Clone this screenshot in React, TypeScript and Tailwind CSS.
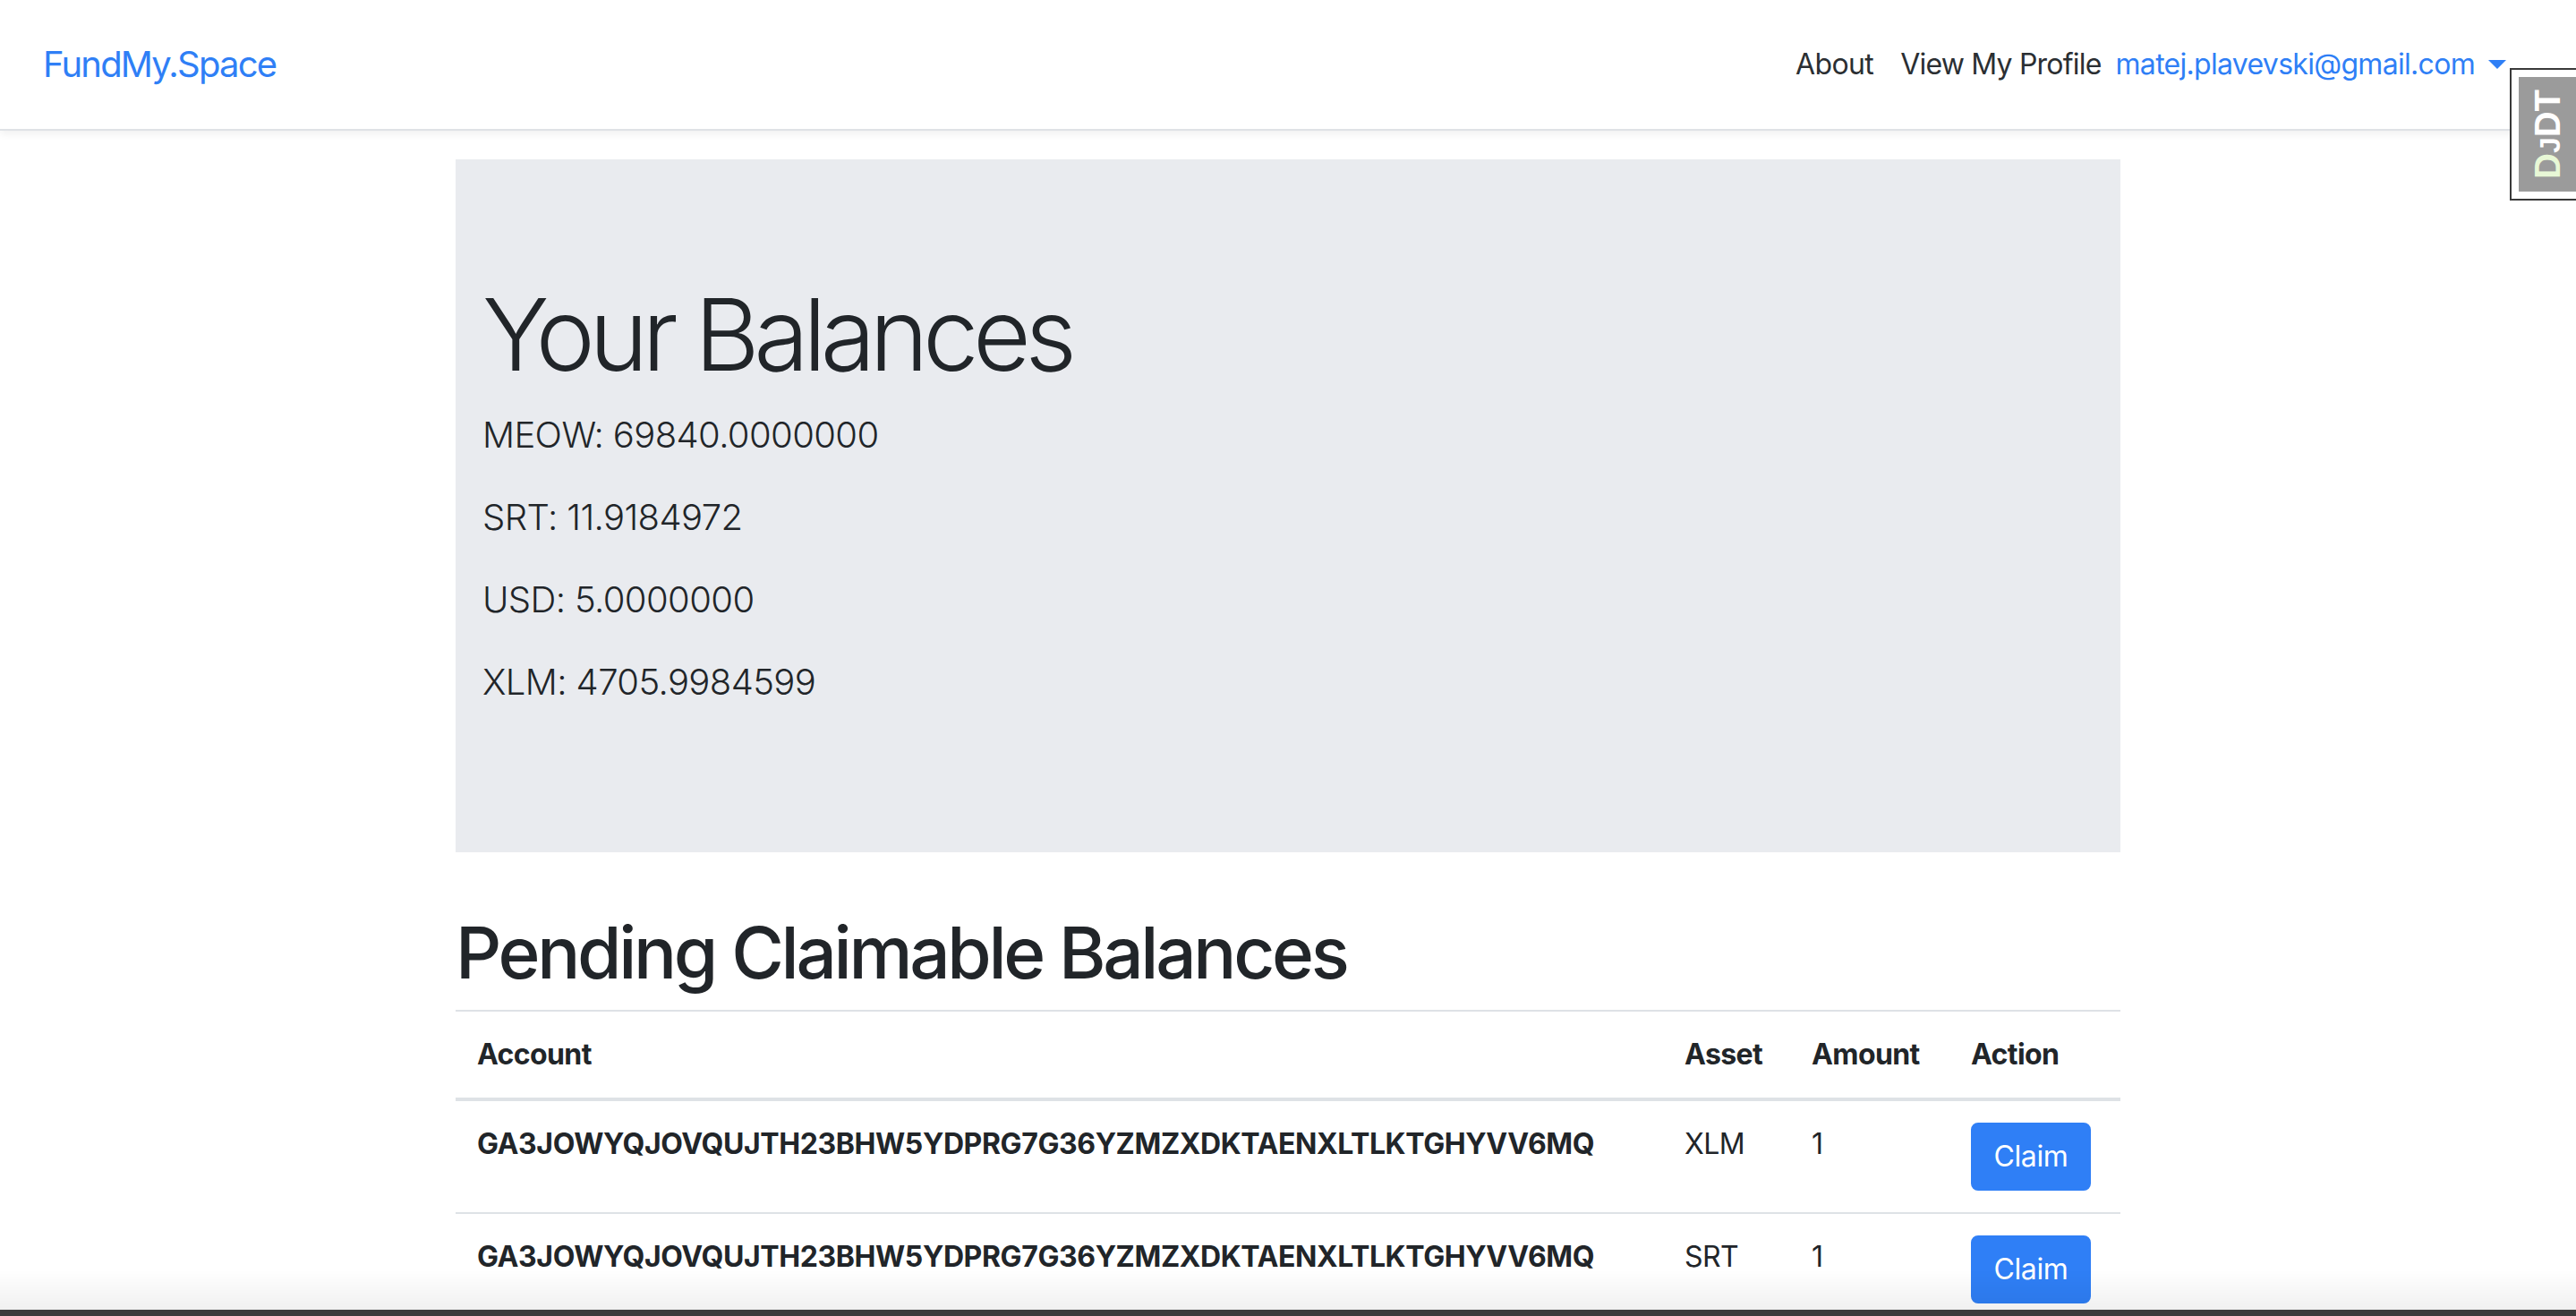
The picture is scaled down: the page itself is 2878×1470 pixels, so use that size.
import React from "react";

const ACCOUNT = "GA3JOWYQJOVQUJTH23BHW5YDPRG7G36YZMZXDKTAENXLTLKTGHYVV6MQ";

const balances = [
  "MEOW: 69840.0000000",
  "SRT: 11.9184972",
  "USD: 5.0000000",
  "XLM: 4705.9984599",
];

const claimables = [
  { account: ACCOUNT, asset: "XLM", amount: "1" },
  { account: ACCOUNT, asset: "SRT", amount: "1" },
];

function DjdtHandle() {
  return (
    <div className="absolute right-0 top-[76px] h-[148px] w-[74px] border-2 border-r-0 border-[#3a3a3a] bg-white pl-[8px] py-[8px]">
      <div className="flex h-full w-full items-center justify-center bg-[#9b9b9b]">
        <div className="-rotate-90 whitespace-nowrap font-['Liberation_Sans',sans-serif] text-[40px] font-bold leading-none text-white">
          <span className="text-[#e8f8d6]">D</span>
          <span className="text-[32px]">J</span>DT
        </div>
      </div>
    </div>
  );
}

export default function App() {
  return (
    <div className="relative min-h-[1470px] bg-white font-['Inter','Noto_Sans',sans-serif] text-[#212529]">
      {/* Navbar */}
      <nav className="flex h-[146px] items-center justify-between border-b-2 border-[#dfe2e6] bg-white px-12 shadow-[0_4px_8px_rgba(0,0,0,0.06)]">
        <a className="text-[40px] leading-[60px] tracking-[-1.8px] text-[#2f7ff6]">FundMy.Space</a>
        <div className="mr-[14px] flex items-center text-[32px] leading-[48px] tracking-[-0.6px]">
          <a className="px-4 text-[#2b2f33]">About</a>
          <a className="pl-[14px] pr-0 tracking-[-0.8px] text-[#2b2f33]">View My Profile</a>
          <a className="flex items-center px-4 tracking-[-0.7px] text-[#2f7ff6]">
            matej.plavevski@gmail.com
            <span className="ml-[15px] inline-block h-0 w-0 border-x-[10px] border-t-[10px] border-x-transparent border-t-[#2f7ff6]" />
          </a>
        </div>
      </nav>

      <DjdtHandle />

      {/* Main container */}
      <main className="mx-auto w-[1920px] px-[30px]">
        <section className="mt-[32px] mb-[64px] bg-[#e9ebef] px-[30px] py-[128px]">
          <h1 className="mb-[16px] text-[112px] font-light leading-[134px] tracking-[-6.6px]">Your Balances</h1>
          {balances.map((b) => (
            <p key={b} className="mb-[32px] text-[40px] font-light leading-[60px] tracking-[-0.6px]">
              {b}
            </p>
          ))}
        </section>

        <h1 className="mb-[16px] text-[80px] font-medium leading-[96px] tracking-[-3.3px]">Pending Claimable Balances</h1>

        <table className="w-full table-fixed border-collapse text-[32px] leading-[48px]">
          <colgroup>
            <col className="w-[1349px]" />
            <col className="w-[142px]" />
            <col className="w-[178px]" />
            <col className="w-[191px]" />
          </colgroup>
          <thead>
            <tr className="border-t-2 border-b-4 border-[#dee2e6]">
              <th className="p-6 text-left font-bold tracking-[-0.6px]">Account</th>
              <th className="p-6 text-left font-bold tracking-[-0.6px]">Asset</th>
              <th className="p-6 text-left font-bold tracking-[-0.6px]">Amount</th>
              <th className="p-6 text-left font-bold tracking-[-0.6px]">Action</th>
            </tr>
          </thead>
          <tbody>
            {claimables.map((c, i) => (
              <tr key={i} className="border-t-2 border-[#dee2e6]">
                <td className="p-6 align-top font-bold tracking-[-0.4px] whitespace-nowrap">{c.account}</td>
                <td className="p-6 align-top tracking-[-0.6px]">{c.asset}</td>
                <td className="p-6 align-top">{c.amount}</td>
                <td className="p-6 align-top">
                  <button className="h-[76px] w-[134px] rounded-[8px] border-2 border-[#2f7ff6] bg-[#2f7ff6] text-[32px] leading-[48px] tracking-[-0.4px] text-white">
                    Claim
                  </button>
                </td>
              </tr>
            ))}
          </tbody>
        </table>
      </main>

      {/* Window bottom edge */}
      <div className="pointer-events-none fixed inset-x-0 bottom-0">
        <div className="h-[44px] bg-gradient-to-b from-transparent to-[rgba(0,0,0,0.06)]" />
        <div className="h-[7px] bg-[#3b3b3b]" />
      </div>
    </div>
  );
}
